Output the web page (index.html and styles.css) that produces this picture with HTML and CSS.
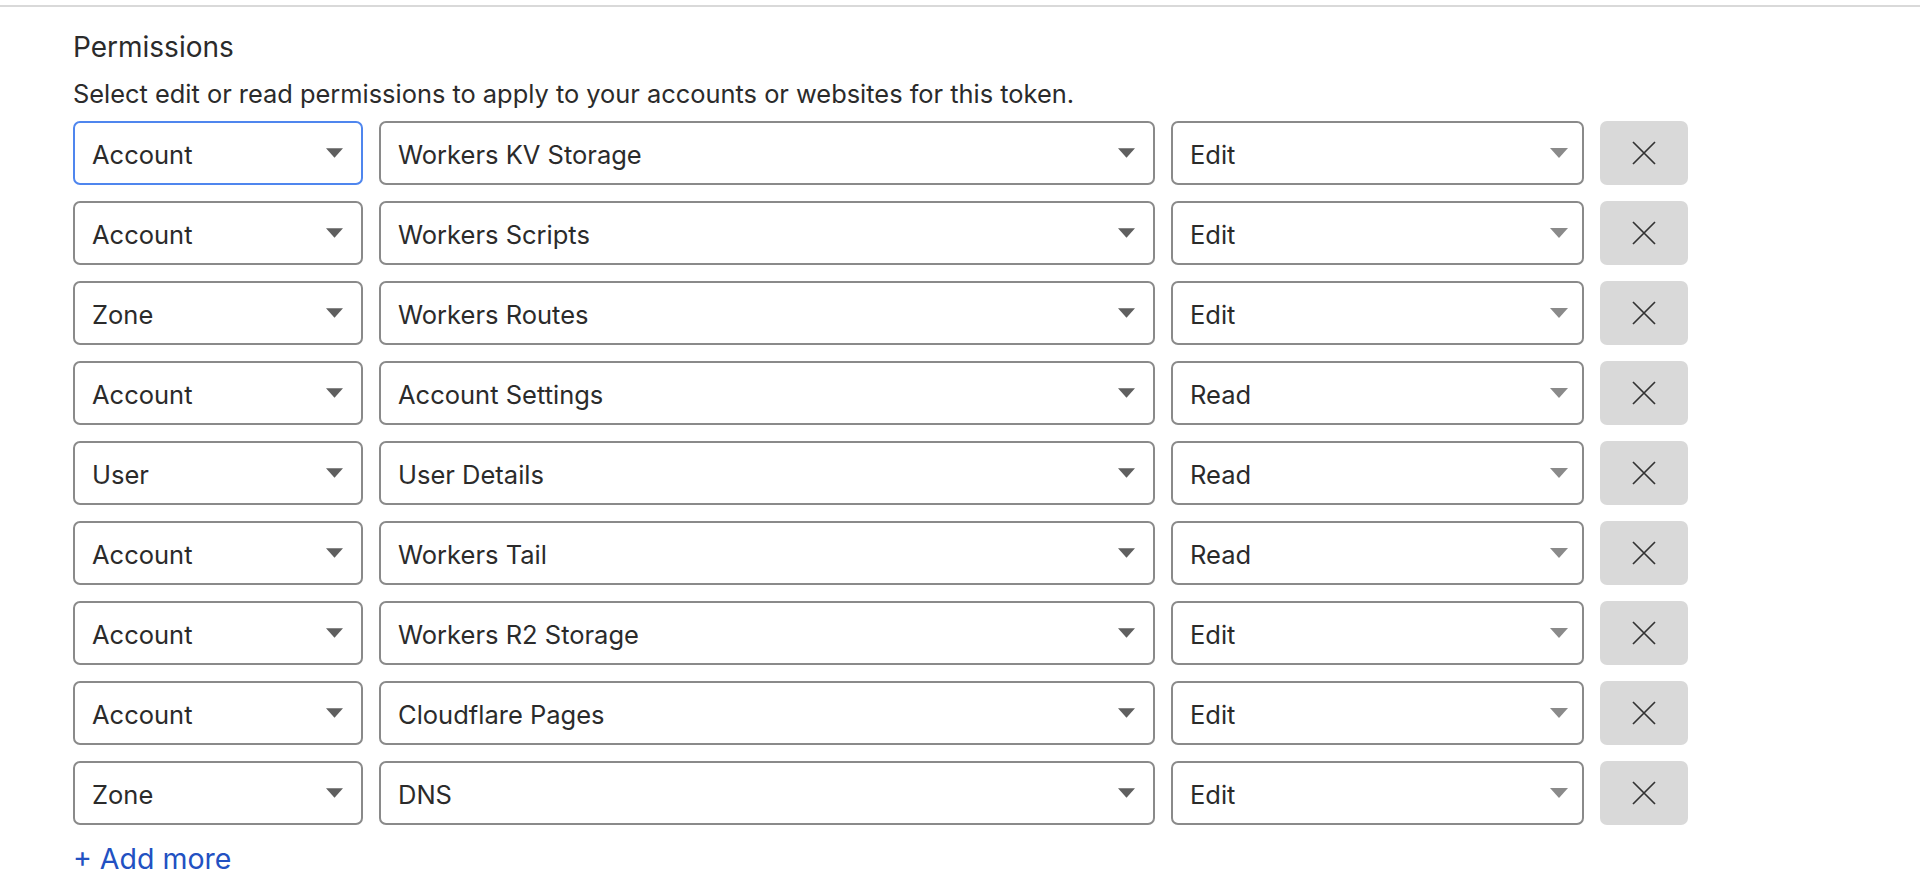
FILE: index.html
```html
<!DOCTYPE html>
<html lang="en">
<head>
<meta charset="utf-8">
<title>Permissions</title>
<link rel="stylesheet" href="styles.css">
</head>
<body>
<div class="topline"></div>
<section class="perm">
  <h2 class="title">Permissions</h2>
  <p class="desc">Select edit or read permissions to apply to your accounts or websites for this token.</p>
  <div class="rows">
    <div class="row">
      <div class="sel focused"><span>Account</span><svg class="arr" viewBox="0 0 18 10"><path d="M0 0h18L9 10z"/></svg></div>
      <div class="sel"><span>Workers KV Storage</span><svg class="arr" viewBox="0 0 18 10"><path d="M0 0h18L9 10z"/></svg></div>
      <div class="sel sel-perm"><span>Edit</span><svg class="arr" viewBox="0 0 18 10"><path d="M0 0h18L9 10z"/></svg></div>
      <button class="rm" type="button"><svg viewBox="0 0 24 24"><path d="M1 1l22 22M23 1L1 23"/></svg></button>
    </div>
    <div class="row">
      <div class="sel"><span>Account</span><svg class="arr" viewBox="0 0 18 10"><path d="M0 0h18L9 10z"/></svg></div>
      <div class="sel"><span>Workers Scripts</span><svg class="arr" viewBox="0 0 18 10"><path d="M0 0h18L9 10z"/></svg></div>
      <div class="sel sel-perm"><span>Edit</span><svg class="arr" viewBox="0 0 18 10"><path d="M0 0h18L9 10z"/></svg></div>
      <button class="rm" type="button"><svg viewBox="0 0 24 24"><path d="M1 1l22 22M23 1L1 23"/></svg></button>
    </div>
    <div class="row">
      <div class="sel"><span>Zone</span><svg class="arr" viewBox="0 0 18 10"><path d="M0 0h18L9 10z"/></svg></div>
      <div class="sel"><span>Workers Routes</span><svg class="arr" viewBox="0 0 18 10"><path d="M0 0h18L9 10z"/></svg></div>
      <div class="sel sel-perm"><span>Edit</span><svg class="arr" viewBox="0 0 18 10"><path d="M0 0h18L9 10z"/></svg></div>
      <button class="rm" type="button"><svg viewBox="0 0 24 24"><path d="M1 1l22 22M23 1L1 23"/></svg></button>
    </div>
    <div class="row">
      <div class="sel"><span>Account</span><svg class="arr" viewBox="0 0 18 10"><path d="M0 0h18L9 10z"/></svg></div>
      <div class="sel"><span>Account Settings</span><svg class="arr" viewBox="0 0 18 10"><path d="M0 0h18L9 10z"/></svg></div>
      <div class="sel sel-perm"><span>Read</span><svg class="arr" viewBox="0 0 18 10"><path d="M0 0h18L9 10z"/></svg></div>
      <button class="rm" type="button"><svg viewBox="0 0 24 24"><path d="M1 1l22 22M23 1L1 23"/></svg></button>
    </div>
    <div class="row">
      <div class="sel"><span>User</span><svg class="arr" viewBox="0 0 18 10"><path d="M0 0h18L9 10z"/></svg></div>
      <div class="sel"><span>User Details</span><svg class="arr" viewBox="0 0 18 10"><path d="M0 0h18L9 10z"/></svg></div>
      <div class="sel sel-perm"><span>Read</span><svg class="arr" viewBox="0 0 18 10"><path d="M0 0h18L9 10z"/></svg></div>
      <button class="rm" type="button"><svg viewBox="0 0 24 24"><path d="M1 1l22 22M23 1L1 23"/></svg></button>
    </div>
    <div class="row">
      <div class="sel"><span>Account</span><svg class="arr" viewBox="0 0 18 10"><path d="M0 0h18L9 10z"/></svg></div>
      <div class="sel"><span>Workers Tail</span><svg class="arr" viewBox="0 0 18 10"><path d="M0 0h18L9 10z"/></svg></div>
      <div class="sel sel-perm"><span>Read</span><svg class="arr" viewBox="0 0 18 10"><path d="M0 0h18L9 10z"/></svg></div>
      <button class="rm" type="button"><svg viewBox="0 0 24 24"><path d="M1 1l22 22M23 1L1 23"/></svg></button>
    </div>
    <div class="row">
      <div class="sel"><span>Account</span><svg class="arr" viewBox="0 0 18 10"><path d="M0 0h18L9 10z"/></svg></div>
      <div class="sel"><span>Workers R2 Storage</span><svg class="arr" viewBox="0 0 18 10"><path d="M0 0h18L9 10z"/></svg></div>
      <div class="sel sel-perm"><span>Edit</span><svg class="arr" viewBox="0 0 18 10"><path d="M0 0h18L9 10z"/></svg></div>
      <button class="rm" type="button"><svg viewBox="0 0 24 24"><path d="M1 1l22 22M23 1L1 23"/></svg></button>
    </div>
    <div class="row">
      <div class="sel"><span>Account</span><svg class="arr" viewBox="0 0 18 10"><path d="M0 0h18L9 10z"/></svg></div>
      <div class="sel"><span>Cloudflare Pages</span><svg class="arr" viewBox="0 0 18 10"><path d="M0 0h18L9 10z"/></svg></div>
      <div class="sel sel-perm"><span>Edit</span><svg class="arr" viewBox="0 0 18 10"><path d="M0 0h18L9 10z"/></svg></div>
      <button class="rm" type="button"><svg viewBox="0 0 24 24"><path d="M1 1l22 22M23 1L1 23"/></svg></button>
    </div>
    <div class="row">
      <div class="sel"><span>Zone</span><svg class="arr" viewBox="0 0 18 10"><path d="M0 0h18L9 10z"/></svg></div>
      <div class="sel"><span>DNS</span><svg class="arr" viewBox="0 0 18 10"><path d="M0 0h18L9 10z"/></svg></div>
      <div class="sel sel-perm"><span>Edit</span><svg class="arr" viewBox="0 0 18 10"><path d="M0 0h18L9 10z"/></svg></div>
      <button class="rm" type="button"><svg viewBox="0 0 24 24"><path d="M1 1l22 22M23 1L1 23"/></svg></button>
    </div>
  </div>
  <a class="add" href="#">+ Add more</a>
</section>
</body>
</html>
```

FILE: styles.css
```css
* { box-sizing: border-box; }
html, body {
  margin: 0;
  padding: 0;
  background: #fff;
}
body {
  font-family: Inter, "Noto Sans", "Liberation Sans", sans-serif;
  color: #2b2b2b;
  font-size: 25.5px;
  overflow: hidden;
}
.topline {
  height: 7px;
  border-bottom: 2px solid #d9d9d9;
}
.perm {
  padding: 24px 0 0 73px;
}
.title {
  margin: 0;
  font-size: 28px;
  font-weight: 400;
  line-height: 32px;
  color: #2b2b2b;
}
.desc {
  margin: 15px 0 0;
  font-size: 25.4px;
  line-height: 32px;
  color: #2b2b2b;
}
.rows {
  margin-top: 11px;
  display: flex;
  flex-direction: column;
  gap: 16px;
}
.row {
  display: grid;
  grid-template-columns: 290px 776px 413px 88px;
  gap: 16px;
  height: 64px;
}
.sel {
  display: flex;
  align-items: center;
  justify-content: space-between;
  border: 2px solid #8a8a8a;
  border-radius: 7px;
  padding: 3px 18px 0 17px;
  background: #fff;
  color: #2b2b2b;
  font-size: 25.5px;
  line-height: 32px;
}
.sel.focused {
  border-color: #4f86ee;
}
.arr {
  width: 17px;
  height: 10px;
  fill: #5f5f5f;
  flex: none;
  margin-top: -3px;
}
.sel-perm {
  padding-right: 14px;
}
.sel-perm .arr {
  fill: #8a8a8a;
  width: 18px;
  margin-top: -4px;
}
.rm {
  border: 0;
  margin: 0;
  padding: 0;
  background: #d9d9d9;
  border-radius: 7px;
  display: flex;
  align-items: center;
  justify-content: center;
  cursor: pointer;
}
.rm svg {
  width: 24px;
  height: 24px;
  fill: none;
  stroke: #333;
  stroke-width: 1.7;
}
.add {
  display: inline-block;
  margin-top: 18px;
  font-size: 28.5px;
  line-height: 32px;
  color: #2251c2;
  text-decoration: none;
}
```
